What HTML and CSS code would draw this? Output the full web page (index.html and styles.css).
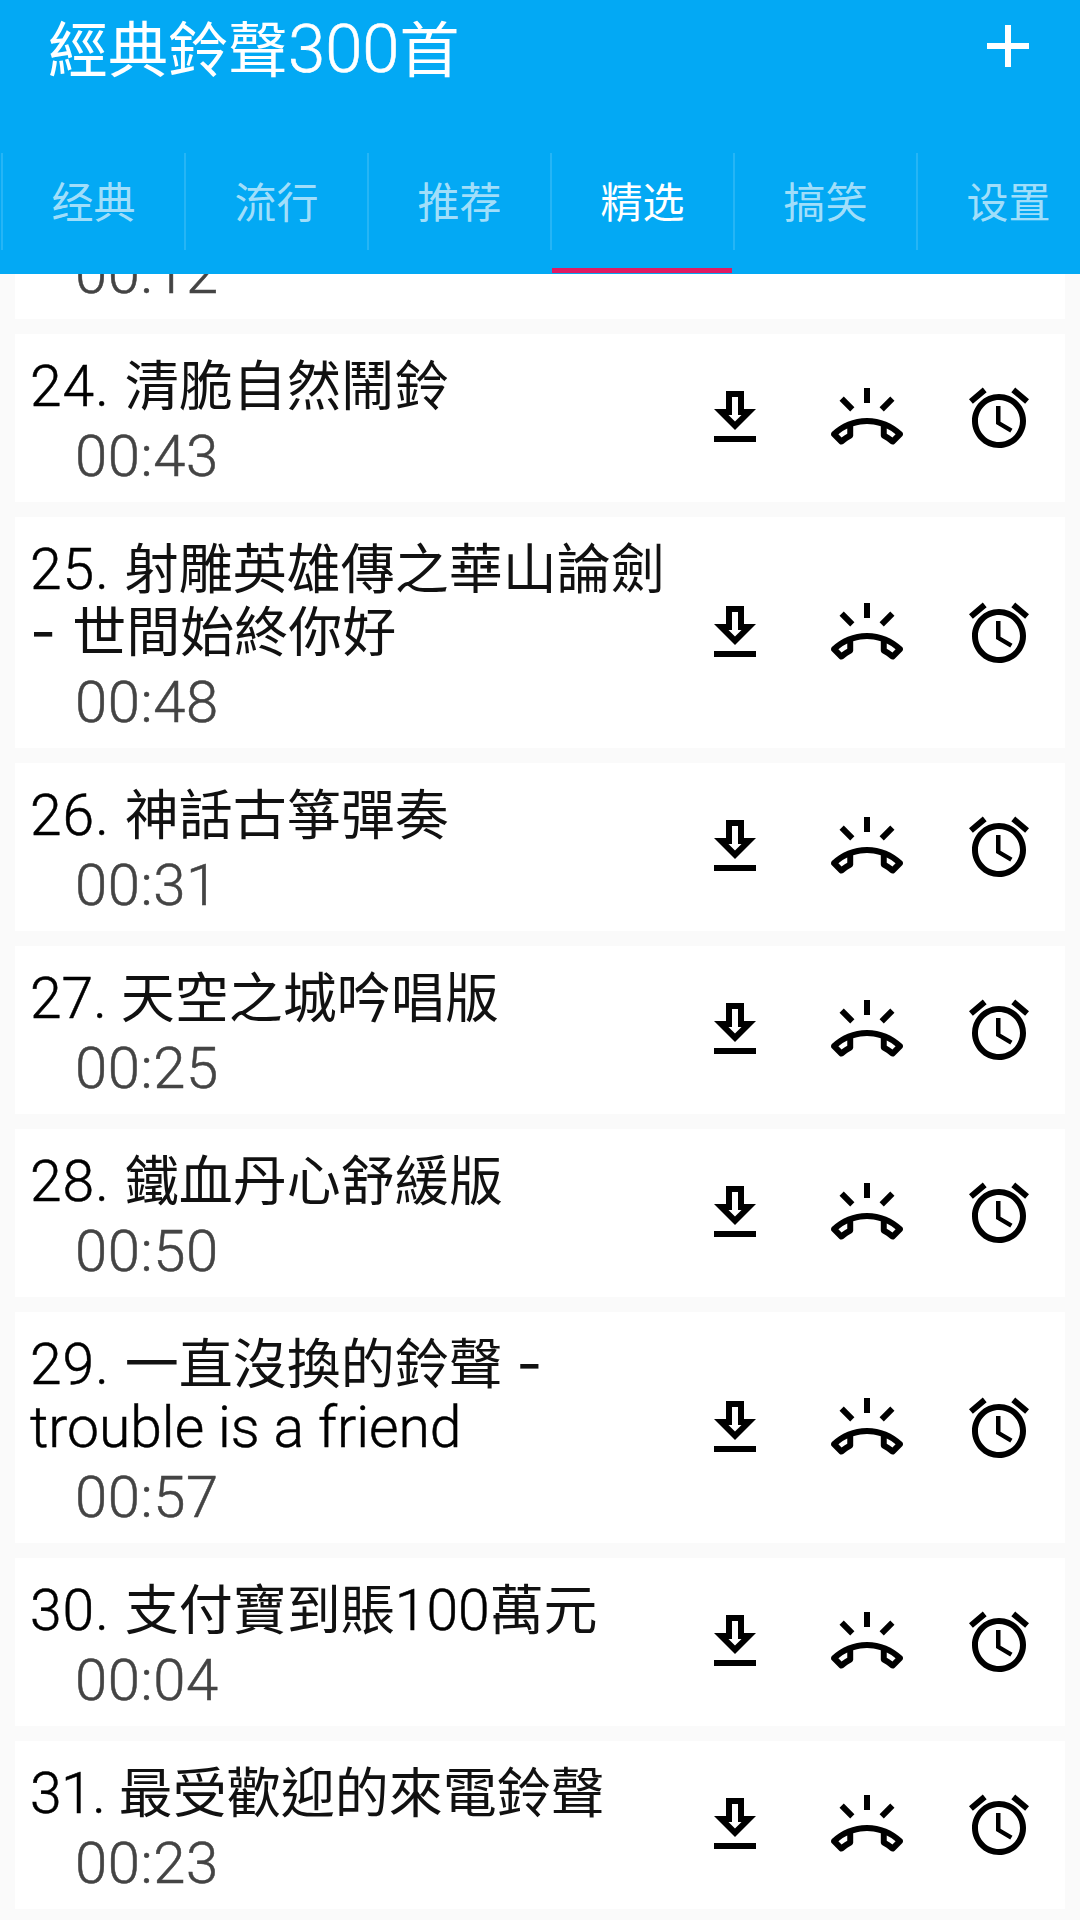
FILE: index.html
```html
<!DOCTYPE html>
<html lang="zh-Hant">
<head>
<meta charset="UTF-8" />
<meta name="viewport" content="width=device-width, initial-scale=1" />
<title>經典鈴聲300首</title>
<link rel="stylesheet" href="styles.css">
</head>
<body>
  <svg class="icon-defs" aria-hidden="true">
    <symbol id="icon-download" viewBox="0 0 24 24">
      <path fill-rule="evenodd" d="M19 9h-4V3H9v6H5l7 7 7-7zM11 5h2v6h1.17L12 13.17 9.83 11H11V5zM5 18h14v2H5z" />
    </symbol>
    <symbol id="icon-ring" viewBox="0 0 24 24">
      <path d="M21.16 6.26l-1.41-1.41-3.56 3.55 1.41 1.41zM11 2h2v5h-2zM6.4 9.81L7.81 8.4 4.26 4.84 2.84 6.26z" />
      <path fill-rule="evenodd" d="M23.71 16.67C20.66 13.78 16.54 12 12 12S3.34 13.78.29 16.67c-.18.18-.29.43-.29.71s.11.53.29.71l2.48 2.48c.18.18.43.29.71.29.27 0 .52-.11.7-.28.79-.74 1.69-1.36 2.66-1.85.33-.16.56-.5.56-.9v-3.1C9.15 14.25 10.6 14 12 14s2.85.25 4.6.72v3.1c0 .39.23.74.56.9.98.49 1.87 1.12 2.67 1.85.18.18.43.28.7.28.28 0 .53-.11.71-.29l2.48-2.48c.18-.18.29-.43.29-.71s-.11-.52-.29-.7zM3.53 18.46l-1.07-1.07c.91-.75 1.91-1.39 2.96-1.91v1.79c-.66.38-1.29.75-1.89 1.19zM20.47 18.46l1.07-1.07c-.91-.75-1.91-1.39-2.96-1.91v1.79c.66.38 1.29.75 1.89 1.19z" />
    </symbol>
    <symbol id="icon-alarm" viewBox="0 0 24 24">
      <path d="M22 5.72l-4.6-3.86-1.29 1.53 4.6 3.86L22 5.72zM7.88 3.39L6.6 1.86 2 5.71l1.29 1.53 4.59-3.85zM12.5 8H11v6l4.75 2.85.75-1.23-4-2.37V8zM12 4c-4.97 0-9 4.03-9 9s4.03 9 9 9 9-4.03 9-9-4.03-9-9-9zm0 16c-3.87 0-7-3.13-7-7s3.13-7 7-7 7 3.13 7 7-3.13 7-7 7z" />
    </symbol>
  </svg>

  <header class="app-header">
    <div class="toolbar">
      <h1 class="app-title">經典鈴聲<span class="title-num">300</span>首</h1>
      <button class="add-btn" aria-label="Add">
        <svg class="icon" viewBox="0 0 24 24"><path d="M19 13h-6v6h-2v-6H5v-2h6V5h2v6h6v2z" /></svg>
      </button>
    </div>
    <nav class="tabs">
      <div class="tab"><span class="tab-label">经典</span><span class="tab-mark"></span></div>
      <div class="tab"><span class="tab-label">流行</span><span class="tab-mark"></span></div>
      <div class="tab"><span class="tab-label">推荐</span><span class="tab-mark"></span></div>
      <div class="tab active"><span class="tab-label">精选</span><span class="tab-mark"></span></div>
      <div class="tab"><span class="tab-label">搞笑</span><span class="tab-mark"></span></div>
      <div class="tab"><span class="tab-label">设置</span><span class="tab-mark"></span></div>
    </nav>
  </header>

  <main class="song-list">
    <article class="song">
      <div class="song-info">
        <div class="song-time">00:12</div>
      </div>
    </article>

    <article class="song">
      <div class="song-info">
        <div class="song-title"><span class="num">24. </span>清脆自然鬧鈴</div>
        <div class="song-time">00:43</div>
      </div>
      <div class="song-actions">
        <svg class="icon"><use href="#icon-download" /></svg>
        <svg class="icon"><use href="#icon-ring" /></svg>
        <svg class="icon"><use href="#icon-alarm" /></svg>
      </div>
    </article>

    <article class="song">
      <div class="song-info">
        <div class="song-title"><span class="num">25. </span>射雕英雄傳之華山論劍 <span class="dash">- </span>世間始終你好</div>
        <div class="song-time">00:48</div>
      </div>
      <div class="song-actions">
        <svg class="icon"><use href="#icon-download" /></svg>
        <svg class="icon"><use href="#icon-ring" /></svg>
        <svg class="icon"><use href="#icon-alarm" /></svg>
      </div>
    </article>

    <article class="song">
      <div class="song-info">
        <div class="song-title"><span class="num">26. </span>神話古箏彈奏</div>
        <div class="song-time">00:31</div>
      </div>
      <div class="song-actions">
        <svg class="icon"><use href="#icon-download" /></svg>
        <svg class="icon"><use href="#icon-ring" /></svg>
        <svg class="icon"><use href="#icon-alarm" /></svg>
      </div>
    </article>

    <article class="song">
      <div class="song-info">
        <div class="song-title"><span class="latin">27. </span>天空之城吟唱版</div>
        <div class="song-time">00:25</div>
      </div>
      <div class="song-actions">
        <svg class="icon"><use href="#icon-download" /></svg>
        <svg class="icon"><use href="#icon-ring" /></svg>
        <svg class="icon"><use href="#icon-alarm" /></svg>
      </div>
    </article>

    <article class="song">
      <div class="song-info">
        <div class="song-title"><span class="num">28. </span>鐵血丹心舒緩版</div>
        <div class="song-time">00:50</div>
      </div>
      <div class="song-actions">
        <svg class="icon"><use href="#icon-download" /></svg>
        <svg class="icon"><use href="#icon-ring" /></svg>
        <svg class="icon"><use href="#icon-alarm" /></svg>
      </div>
    </article>

    <article class="song">
      <div class="song-info">
        <div class="song-title"><span class="num">29. </span>一直沒換的鈴聲 <span class="dash">- </span><span class="latin">trouble is a friend</span></div>
        <div class="song-time">00:57</div>
      </div>
      <div class="song-actions">
        <svg class="icon"><use href="#icon-download" /></svg>
        <svg class="icon"><use href="#icon-ring" /></svg>
        <svg class="icon"><use href="#icon-alarm" /></svg>
      </div>
    </article>

    <article class="song">
      <div class="song-info">
        <div class="song-title"><span class="num">30. </span>支付寶到賬<span class="latin">100</span>萬元</div>
        <div class="song-time">00:04</div>
      </div>
      <div class="song-actions">
        <svg class="icon"><use href="#icon-download" /></svg>
        <svg class="icon"><use href="#icon-ring" /></svg>
        <svg class="icon"><use href="#icon-alarm" /></svg>
      </div>
    </article>

    <article class="song">
      <div class="song-info">
        <div class="song-title"><span class="num num-narrow">31. </span>最受歡迎的來電鈴聲</div>
        <div class="song-time">00:23</div>
      </div>
      <div class="song-actions">
        <svg class="icon"><use href="#icon-download" /></svg>
        <svg class="icon"><use href="#icon-ring" /></svg>
        <svg class="icon"><use href="#icon-alarm" /></svg>
      </div>
    </article>
  </main>
</body>
</html>
```

FILE: styles.css
```css
* {
  box-sizing: border-box;
}

body {
  font-family: Roboto, 'Noto Sans CJK TC', sans-serif;
  background: #fafafa;
  margin: 0;
  width: 1080px;
  height: 1920px;
  display: flex;
  flex-direction: column;
  overflow: hidden;
}

.icon-defs {
  display: none;
}

.icon {
  width: 72px;
  height: 72px;
  fill: currentColor;
  display: block;
}

/* Header */
.app-header {
  background: #03a9f4;
  color: #fff;
  flex: none;
  padding-bottom: 1px;
}

.toolbar {
  height: 92px;
  margin-bottom: 61px;
  display: flex;
  align-items: center;
  justify-content: space-between;
  padding-left: 48px;
}

.app-title {
  margin: 0;
  padding-top: 12px;
  font-size: 60px;
  line-height: 80px;
  font-weight: 400;
}

.title-num {
  font-size: 67px;
  line-height: 1;
  font-weight: 300;
  -webkit-text-stroke: 0.6px;
}

.add-btn {
  width: 144px;
  height: 92px;
  padding: 0;
  border: none;
  background: transparent;
  color: #fff;
  display: flex;
  align-items: center;
  justify-content: center;
}

/* Tabs */
.tabs {
  display: flex;
  margin-left: 1px;
  height: 120px;
}

.tab {
  flex: none;
  width: 183px;
  display: flex;
  flex-direction: column;
}

.tab-label {
  height: 97px;
  padding-bottom: 4px;
  border-left: 2px solid rgba(255, 255, 255, 0.14);
  display: flex;
  align-items: center;
  justify-content: center;
  font-size: 42px;
  color: rgba(255, 255, 255, 0.65);
}

.tab.active .tab-label {
  color: #fff;
}

.tab-mark {
  height: 5px;
  margin: 18px 1px 0 2px;
}

.tab.active .tab-mark {
  background: #e01b62;
}

/* Song list, scrolled to its end so the first card is cut by the header */
.song-list {
  flex: 1;
  min-height: 0;
  overflow: hidden;
  display: flex;
  flex-direction: column;
  justify-content: flex-end;
  gap: 15px;
  padding: 0 15px 11px;
}

.song {
  flex: none;
  background: #fff;
  display: flex;
  align-items: center;
}

.song-info {
  width: 654px;
  flex: none;
  padding: 22px 0 14px 15px;
}

.song-title {
  font-size: 54px;
  line-height: 63px;
  color: #111;
}

.num,
.latin {
  font-size: 57px;
  line-height: 1;
  font-weight: 300;
  color: #000;
  -webkit-text-stroke: 0.5px;
}

.num {
  letter-spacing: 1px;
}

.num-narrow {
  letter-spacing: -0.5px;
}

.dash {
  font-family: Inter, sans-serif;
  font-size: 57px;
  line-height: 1;
}

.song-time {
  font-size: 58px;
  font-weight: 300;
  letter-spacing: 0.6px;
  line-height: 63px;
  margin: 6px 0 0 45px;
  color: #444;
  -webkit-text-stroke: 0.5px;
}

.song-actions {
  display: flex;
  color: #000;
}

.song-actions .icon {
  margin: 0 30px;
}
```
